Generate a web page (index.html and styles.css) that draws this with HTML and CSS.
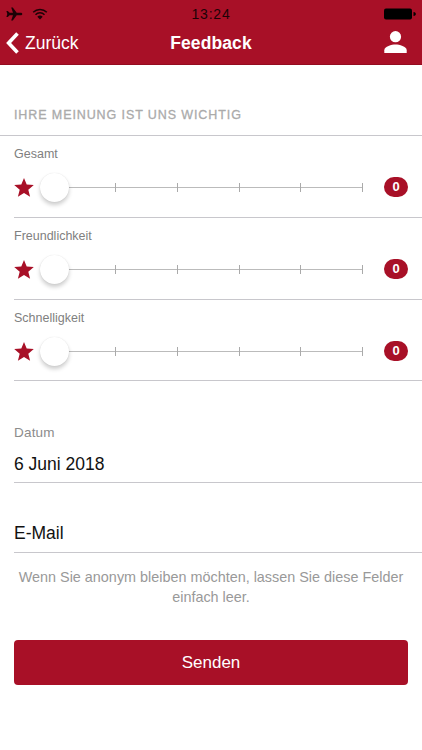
FILE: index.html
```html
<!DOCTYPE html>
<html lang="de">

<head>
    <meta charset="UTF-8">
    <meta name="viewport" content="width=device-width, initial-scale=1.0">
    <title>Feedback</title>
    <link rel="stylesheet" href="styles.css">
</head>

<body>

    <header class="header">
        <div class="status-bar">
            <div class="status-icons">
                <svg class="plane" viewBox="0 0 17 14">
                    <path d="M16.3 7c0-.8-.8-1.300-1.800-1.300H10.700L6.800.4H5.200L7 5.700H3.600L1.800 4H.4l.9 3-.9 3h1.400l1.800-1.700H7L5.200 13.600h1.600l3.900-5.300h3.800c1 0 1.800-.5 1.800-1.300z"/>
                </svg>
                <svg class="wifi" viewBox="0 0 16 12">
                    <path d="M1.200 4.200a9.600 9.600 0 0 1 13.600 0M3.500 6.700a6.400 6.400 0 0 1 9 0" fill="none" stroke="#1c0206" stroke-width="1.500"/>
                    <path d="M5.300 8.800a3.800 3.800 0 0 1 5.400 0L8 11.500z"/>
                </svg>
            </div>
            <span class="time">13:24</span>
            <svg class="battery" viewBox="0 0 33 12">
                <rect x="0" y="0.500" width="28" height="11" rx="2"/>
                <path d="M29.500 4c1.800.3 2.300 1 2.300 2s-.5 1.700-2.300 2z"/>
            </svg>
        </div>
        <nav class="navbar">
            <a class="back">
                <svg class="chevron" viewBox="0 0 13 22">
                    <path d="M11.500 1.500L2.600 11l8.900 9.500" fill="none" stroke="#fff" stroke-width="3.600"/>
                </svg>
                <span>Zurück</span>
            </a>
            <h1 class="title">Feedback</h1>
            <svg class="user" viewBox="0 0 23 22">
                <circle cx="11.500" cy="5.700" r="5.600"/>
                <path d="M.3 22v-2.800c0-3.700 7.400-5.600 11.200-5.600s11.200 1.900 11.200 5.600V22z"/>
            </svg>
        </nav>
    </header>

    <main>
        <h2 class="list-header">IHRE MEINUNG IST UNS WICHTIG</h2>

        <section class="ratings">
            <div class="rating">
                <div class="rating-label">Gesamt</div>
                <div class="rating-row">
                    <svg class="star" viewBox="0 0 20 19"><path d="M10 0l2.700 6.600 7.100.5-5.500 4.600 1.800 7L10 14.900l-6.100 3.800 1.800-7L.2 7.100l7.100-.5z"/></svg>
                    <div class="range">
                        <span class="knob"></span>
                        <i class="tick"></i><i class="tick"></i><i class="tick"></i><i class="tick"></i><i class="tick"></i>
                    </div>
                    <span class="badge">0</span>
                </div>
            </div>
            <div class="rating">
                <div class="rating-label">Freundlichkeit</div>
                <div class="rating-row">
                    <svg class="star" viewBox="0 0 20 19"><path d="M10 0l2.700 6.600 7.100.5-5.500 4.600 1.800 7L10 14.900l-6.100 3.800 1.800-7L.2 7.100l7.100-.5z"/></svg>
                    <div class="range">
                        <span class="knob"></span>
                        <i class="tick"></i><i class="tick"></i><i class="tick"></i><i class="tick"></i><i class="tick"></i>
                    </div>
                    <span class="badge">0</span>
                </div>
            </div>
            <div class="rating">
                <div class="rating-label">Schnelligkeit</div>
                <div class="rating-row">
                    <svg class="star" viewBox="0 0 20 19"><path d="M10 0l2.700 6.600 7.100.5-5.500 4.600 1.800 7L10 14.900l-6.100 3.800 1.800-7L.2 7.100l7.100-.5z"/></svg>
                    <div class="range">
                        <span class="knob"></span>
                        <i class="tick"></i><i class="tick"></i><i class="tick"></i><i class="tick"></i><i class="tick"></i>
                    </div>
                    <span class="badge">0</span>
                </div>
            </div>
        </section>

        <div class="field date-field">
            <div class="field-label">Datum</div>
            <div class="field-value">6 Juni 2018</div>
        </div>
        <div class="field email-field">
            <div class="field-value">E-Mail</div>
        </div>

        <p class="hint">Wenn Sie anonym bleiben möchten, lassen Sie diese Felder einfach leer.</p>

        <button class="btn">Senden</button>
    </main>

</body>

</html>
```

FILE: styles.css
```css
* {
    box-sizing: border-box;
}

body {
    margin: 0;
    font-family: "Liberation Sans", Arial, sans-serif;
    background-color: #fff;
    color: #111;
}

.header {
    height: 65px;
    background-color: #a81027;
    border-bottom: 1px solid #940c20;
}

.status-bar {
    display: grid;
    grid-template-columns: 1fr auto 1fr;
    align-items: center;
    height: 26px;
    padding: 2px 5px 0 6px;
    fill: #1c0206;
}

.status-icons {
    display: flex;
    align-items: center;
    gap: 9px;
}

.plane {
    width: 17px;
    height: 14px;
}

.wifi {
    width: 16px;
    height: 12px;
}

.time {
    margin-right: 1px;
    font-size: 14px;
    letter-spacing: 0.8px;
    color: #1c0206;
}

.battery {
    justify-self: end;
    width: 33px;
    height: 12px;
    fill: #000;
}

.navbar {
    display: grid;
    grid-template-columns: 1fr auto 1fr;
    align-items: center;
    height: 34px;
    padding: 0 15px 0 6px;
    color: #fff;
}

.back {
    display: flex;
    align-items: center;
    gap: 6px;
    font-size: 17.5px;
}

.chevron {
    width: 13px;
    height: 22px;
}

.title {
    margin: 0 0 0 9px;
    font-size: 17.5px;
    letter-spacing: 0.1px;
}

.user {
    justify-self: end;
    width: 23px;
    height: 22px;
    margin-bottom: 2px;
    fill: #fff;
}

.list-header {
    height: 71px;
    margin: 0;
    padding: 42px 14px 0;
    border-bottom: 1px solid #c8c7cc;
    font-size: 12.5px;
    font-weight: normal;
    line-height: 16px;
    letter-spacing: 0.9px;
    color: #aaa;
    -webkit-text-stroke: 0.3px #aaa;
}

.ratings {
    padding-left: 14px;
}

.rating {
    height: 82px;
    padding: 10px 14px 0 0;
    border-bottom: 1px solid #c8c7cc;
}

.rating:last-child {
    height: 81px;
}

.rating-label {
    font-size: 12.5px;
    line-height: 16px;
    color: #808080;
}

.rating-row {
    display: flex;
    align-items: center;
    height: 51px;
}

.star {
    flex: none;
    width: 20px;
    height: 19px;
    fill: #a81027;
}

.range {
    display: flex;
    flex: none;
    align-items: center;
    width: 329px;
    padding-left: 6px;
    background: linear-gradient(#bbb, #bbb) 20px center / 309px 1px no-repeat;
    margin-right: 21px;
}

.knob {
    flex: none;
    width: 29px;
    height: 29px;
    border-radius: 50%;
    background-color: #fff;
    box-shadow: 0 3px 4px rgba(0, 0, 0, 0.2), 0 0 1px rgba(0, 0, 0, 0.12);
}

.tick {
    flex: none;
    width: 1px;
    height: 9px;
    margin-left: 60.800px;
    background-color: #aaa;
}

.knob + .tick {
    margin-left: 46px;
}

.badge {
    flex: none;
    width: 24px;
    height: 20px;
    margin-bottom: 1px;
    border-radius: 10px;
    background-color: #a81027;
    color: #fff;
    font-size: 13px;
    font-weight: bold;
    line-height: 20px;
    text-align: center;
}

.field {
    margin-left: 14px;
    border-bottom: 1px solid #c8c7cc;
}

.date-field {
    height: 58px;
    margin-top: 44px;
}

.email-field {
    height: 70px;
    padding-top: 40px;
}

.field-label {
    font-size: 13.5px;
    line-height: 16px;
    letter-spacing: 0.2px;
    color: #8c8c8c;
}

.field-value {
    font-size: 17.5px;
    line-height: 20px;
}

.date-field .field-value {
    margin-top: 13px;
}

.hint {
    margin: 14px 14px 0;
    font-size: 14.4px;
    line-height: 20px;
    text-align: center;
    color: #999;
}

.btn {
    display: block;
    width: 394px;
    height: 45px;
    margin: 33px 14px 0;
    border: none;
    border-radius: 4px;
    background-color: #a81027;
    color: #fff;
    font-family: inherit;
    font-size: 17px;
    cursor: pointer;
}
```
